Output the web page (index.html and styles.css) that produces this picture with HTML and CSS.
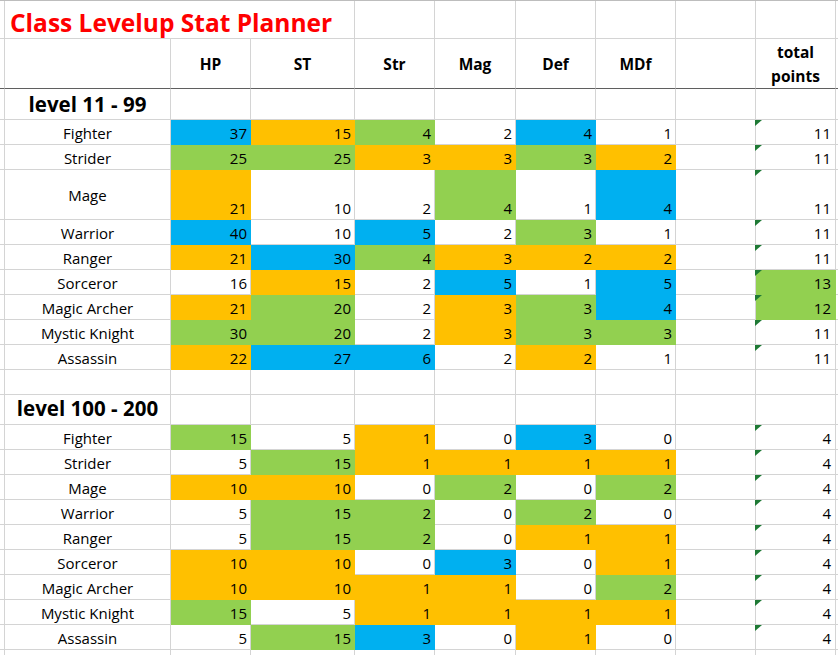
FILE: index.html
```html
<!DOCTYPE html>
<html>
<head>
<meta charset="utf-8">
<title>Class Levelup Stat Planner</title>
<link rel="stylesheet" href="styles.css">
</head>
<body>
<div class="sheet">
  <div class="row r-title">
    <div class="c"></div>
    <div class="c title span3">Class Levelup Stat Planner</div>
    <div class="c"></div><div class="c"></div><div class="c"></div><div class="c"></div><div class="c"></div><div class="c"></div><div class="c"></div>
  </div>
  <div class="row r-head">
    <div class="c"></div>
    <div class="c"></div>
    <div class="c hd">HP</div>
    <div class="c hd">ST</div>
    <div class="c hd">Str</div>
    <div class="c hd">Mag</div>
    <div class="c hd">Def</div>
    <div class="c hd">MDf</div>
    <div class="c"></div>
    <div class="c hd two">total<br>points</div>
    <div class="c"></div>
  </div>
  <div class="row r-lvl1">
    <div class="c"></div>
    <div class="c lvl">level 11 - 99</div>
    <div class="c"></div><div class="c"></div><div class="c"></div><div class="c"></div><div class="c"></div><div class="c"></div><div class="c"></div><div class="c"></div><div class="c"></div>
  </div>

  <div class="row r25">
    <div class="c"></div><div class="c lbl">Fighter</div>
    <div class="c n b">37</div><div class="c n o">15</div><div class="c n g">4</div><div class="c n">2</div><div class="c n b">4</div><div class="c n">1</div>
    <div class="c"></div><div class="c n tot"><span class="tri"></span>11</div><div class="c"></div>
  </div>
  <div class="row r25">
    <div class="c"></div><div class="c lbl">Strider</div>
    <div class="c n g">25</div><div class="c n g">25</div><div class="c n o">3</div><div class="c n o">3</div><div class="c n g">3</div><div class="c n o">2</div>
    <div class="c"></div><div class="c n tot"><span class="tri"></span>11</div><div class="c"></div>
  </div>
  <div class="row r50">
    <div class="c"></div><div class="c lbl mid">Mage</div>
    <div class="c n o">21</div><div class="c n">10</div><div class="c n">2</div><div class="c n g">4</div><div class="c n">1</div><div class="c n b">4</div>
    <div class="c"></div><div class="c n tot"><span class="tri"></span>11</div><div class="c"></div>
  </div>
  <div class="row r25">
    <div class="c"></div><div class="c lbl">Warrior</div>
    <div class="c n b">40</div><div class="c n">10</div><div class="c n b">5</div><div class="c n">2</div><div class="c n g">3</div><div class="c n">1</div>
    <div class="c"></div><div class="c n tot"><span class="tri"></span>11</div><div class="c"></div>
  </div>
  <div class="row r25">
    <div class="c"></div><div class="c lbl">Ranger</div>
    <div class="c n o">21</div><div class="c n b">30</div><div class="c n g">4</div><div class="c n o">3</div><div class="c n o">2</div><div class="c n o">2</div>
    <div class="c"></div><div class="c n tot"><span class="tri"></span>11</div><div class="c"></div>
  </div>
  <div class="row r25">
    <div class="c"></div><div class="c lbl">Sorceror</div>
    <div class="c n">16</div><div class="c n o">15</div><div class="c n">2</div><div class="c n b">5</div><div class="c n">1</div><div class="c n b">5</div>
    <div class="c"></div><div class="c n tot g"><span class="tri"></span>13</div><div class="c"></div>
  </div>
  <div class="row r25">
    <div class="c"></div><div class="c lbl">Magic Archer</div>
    <div class="c n o">21</div><div class="c n g">20</div><div class="c n">2</div><div class="c n o">3</div><div class="c n g">3</div><div class="c n b">4</div>
    <div class="c"></div><div class="c n tot g"><span class="tri"></span>12</div><div class="c"></div>
  </div>
  <div class="row r25">
    <div class="c"></div><div class="c lbl">Mystic Knight</div>
    <div class="c n g">30</div><div class="c n g">20</div><div class="c n">2</div><div class="c n o">3</div><div class="c n g">3</div><div class="c n g">3</div>
    <div class="c"></div><div class="c n tot"><span class="tri"></span>11</div><div class="c"></div>
  </div>
  <div class="row r25">
    <div class="c"></div><div class="c lbl">Assassin</div>
    <div class="c n o">22</div><div class="c n b">27</div><div class="c n b">6</div><div class="c n">2</div><div class="c n o">2</div><div class="c n">1</div>
    <div class="c"></div><div class="c n tot"><span class="tri"></span>11</div><div class="c"></div>
  </div>

  <div class="row r25">
    <div class="c"></div><div class="c"></div><div class="c"></div><div class="c"></div><div class="c"></div><div class="c"></div><div class="c"></div><div class="c"></div><div class="c"></div><div class="c"></div><div class="c"></div>
  </div>

  <div class="row r-lvl2">
    <div class="c"></div>
    <div class="c lvl">level 100 - 200</div>
    <div class="c"></div><div class="c"></div><div class="c"></div><div class="c"></div><div class="c"></div><div class="c"></div><div class="c"></div><div class="c"></div><div class="c"></div>
  </div>

  <div class="row r25">
    <div class="c"></div><div class="c lbl">Fighter</div>
    <div class="c n g">15</div><div class="c n">5</div><div class="c n o">1</div><div class="c n">0</div><div class="c n b">3</div><div class="c n">0</div>
    <div class="c"></div><div class="c n tot"><span class="tri"></span>4</div><div class="c"></div>
  </div>
  <div class="row r25">
    <div class="c"></div><div class="c lbl">Strider</div>
    <div class="c n">5</div><div class="c n g">15</div><div class="c n o">1</div><div class="c n o">1</div><div class="c n o">1</div><div class="c n o">1</div>
    <div class="c"></div><div class="c n tot"><span class="tri"></span>4</div><div class="c"></div>
  </div>
  <div class="row r25">
    <div class="c"></div><div class="c lbl">Mage</div>
    <div class="c n o">10</div><div class="c n o">10</div><div class="c n">0</div><div class="c n g">2</div><div class="c n">0</div><div class="c n g">2</div>
    <div class="c"></div><div class="c n tot"><span class="tri"></span>4</div><div class="c"></div>
  </div>
  <div class="row r25">
    <div class="c"></div><div class="c lbl">Warrior</div>
    <div class="c n">5</div><div class="c n g">15</div><div class="c n g">2</div><div class="c n">0</div><div class="c n g">2</div><div class="c n">0</div>
    <div class="c"></div><div class="c n tot"><span class="tri"></span>4</div><div class="c"></div>
  </div>
  <div class="row r25">
    <div class="c"></div><div class="c lbl">Ranger</div>
    <div class="c n">5</div><div class="c n g">15</div><div class="c n g">2</div><div class="c n">0</div><div class="c n o">1</div><div class="c n o">1</div>
    <div class="c"></div><div class="c n tot"><span class="tri"></span>4</div><div class="c"></div>
  </div>
  <div class="row r25">
    <div class="c"></div><div class="c lbl">Sorceror</div>
    <div class="c n o">10</div><div class="c n o">10</div><div class="c n">0</div><div class="c n b">3</div><div class="c n">0</div><div class="c n o">1</div>
    <div class="c"></div><div class="c n tot"><span class="tri"></span>4</div><div class="c"></div>
  </div>
  <div class="row r25">
    <div class="c"></div><div class="c lbl">Magic Archer</div>
    <div class="c n o">10</div><div class="c n o">10</div><div class="c n o">1</div><div class="c n o">1</div><div class="c n">0</div><div class="c n g">2</div>
    <div class="c"></div><div class="c n tot"><span class="tri"></span>4</div><div class="c"></div>
  </div>
  <div class="row r25">
    <div class="c"></div><div class="c lbl">Mystic Knight</div>
    <div class="c n g">15</div><div class="c n">5</div><div class="c n o">1</div><div class="c n o">1</div><div class="c n o">1</div><div class="c n o">1</div>
    <div class="c"></div><div class="c n tot"><span class="tri"></span>4</div><div class="c"></div>
  </div>
  <div class="row r25">
    <div class="c"></div><div class="c lbl">Assassin</div>
    <div class="c n">5</div><div class="c n g">15</div><div class="c n b">3</div><div class="c n">0</div><div class="c n o">1</div><div class="c n">0</div>
    <div class="c"></div><div class="c n tot"><span class="tri"></span>4</div><div class="c"></div>
  </div>

  <div class="row r25">
    <div class="c"></div><div class="c"></div><div class="c"></div><div class="c"></div><div class="c"></div><div class="c"></div><div class="c"></div><div class="c"></div><div class="c"></div><div class="c"></div><div class="c"></div>
  </div>
</div>
</body>
</html>
```

FILE: styles.css
```css
html, body {
  margin: 0;
  padding: 0;
  background: #ffffff;
}

body {
  font-family: "Open Sans", "Noto Sans", sans-serif;
  font-size: 15px;
  color: #000000;
  overflow: hidden;
}

.sheet {
  width: 838px;
  border-top: 1px solid #bdbdbd;
}

.row {
  display: grid;
  grid-template-columns: 5px 166px 80px 104px 80px 81px 80px 80px 80px 80px 1fr;
}

.r-title { height: 38px; }
.r-head  { height: 50px; }
.r-lvl1  { height: 31px; }
.r-lvl2  { height: 30px; }
.r25     { height: 25px; }
.r50     { height: 50px; }

.c {
  box-sizing: border-box;
  display: flex;
  align-items: flex-end;
  border-right: 1px solid #d4d4d4;
  border-bottom: 1px solid #d4d4d4;
  line-height: 20px;
  padding-bottom: 1px;
  white-space: nowrap;
  position: relative;
  min-width: 0;
}

.row > .c:last-child {
  border-right: none;
}

.r-head > .c {
  border-bottom-color: #5f5f5f;
}

.span3 {
  grid-column: span 3;
}

.title {
  color: #ff0000;
  font-weight: 700;
  font-size: 24.5px;
  line-height: 30px;
  padding-left: 5px;
  padding-bottom: 0;
}

.hd {
  font-weight: 700;
  font-size: 15.5px;
  justify-content: center;
  align-items: center;
  text-align: center;
  line-height: 24px;
  padding-top: 1px;
  padding-bottom: 0;
}

.lvl {
  font-weight: 700;
  font-size: 20.5px;
  line-height: 26px;
  justify-content: center;
  padding-bottom: 2px;
}

.r-lvl2 .lvl {
  padding-bottom: 3px;
}

.lbl {
  justify-content: center;
}

.lbl.mid {
  align-items: center;
  padding-bottom: 0;
  padding-top: 1px;
}

.n {
  justify-content: flex-end;
  padding-right: 3px;
}

.tot {
  padding-right: 4px;
}

.b { background: #00b0f0; border-color: #00b0f0; }
.o { background: #ffc000; border-color: #ffc000; }
.g { background: #92d050; border-color: #92d050; }

.tri {
  position: absolute;
  left: -1px;
  top: 0;
  width: 7px;
  height: 6px;
  background: #1f7a35;
  clip-path: polygon(0 0, 100% 0, 0 100%);
}
```
